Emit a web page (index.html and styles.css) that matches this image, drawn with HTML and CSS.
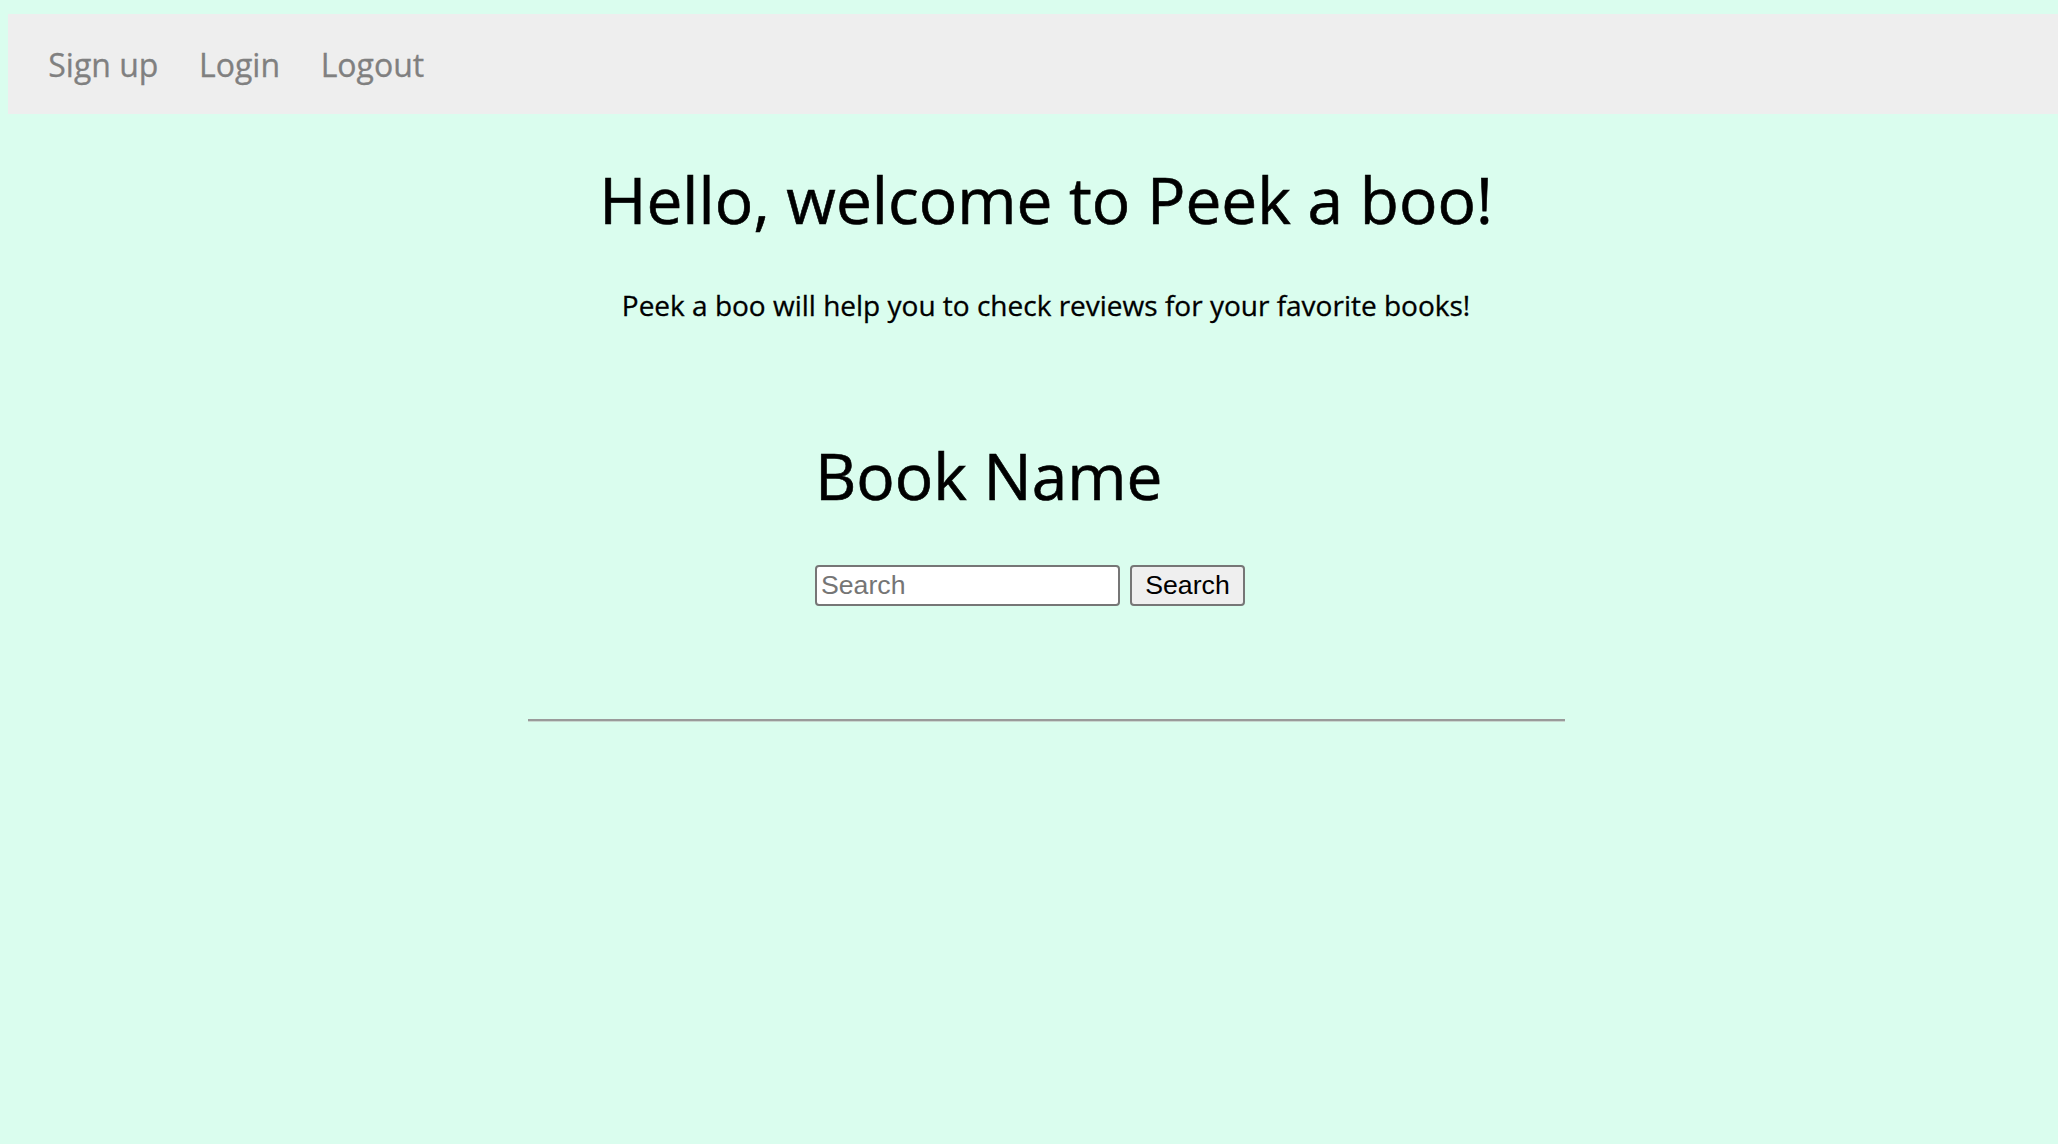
FILE: index.html
```html
<!DOCTYPE html>
<html lang="en">
<head>
<meta charset="utf-8">
<title>Peek a boo</title>
<link rel="stylesheet" href="styles.css">
</head>
<body>
<nav class="topnav">
  <a class="nav-link" href="#">Sign up</a>
  <a class="nav-link" href="#">Login</a>
  <a class="nav-link" href="#">Logout</a>
</nav>
<section class="intro">
  <h1 class="title">Hello, welcome to Peek a boo!</h1>
  <p class="lead">Peek a boo will help you to check reviews for your favorite books!</p>
</section>
<section class="search">
  <h1 class="search-title">Book Name</h1>
  <form class="search-form">
    <input class="search-input" type="text" placeholder="Search">
    <button class="search-button" type="button">Search</button>
  </form>
</section>
<div class="divider-wrap"><hr class="divider"></div>
</body>
</html>
```

FILE: styles.css
```css
html, body {
  margin: 0;
  padding: 0;
}
body {
  background: #dafdee;
  font-family: "Open Sans", "Noto Sans", sans-serif;
  color: #000;
  min-height: 1144px;
}
.topnav {
  margin: 14px 0 0 8px;
  height: 100px;
  box-sizing: border-box;
  background: #eeeeee;
  display: flex;
  align-items: center;
  padding: 0 0 0 20px;
}
.nav-link {
  font-size: 32px;
  color: #808080;
  text-decoration: none;
  padding: 0 20.3px;
  line-height: normal;
  -webkit-text-stroke: 0.3px #808080;
}
.intro {
  padding-left: 34px;
  text-align: center;
}
.title {
  font-size: 64px;
  font-weight: normal;
  margin: 42px 0 43px;
  line-height: normal;
  -webkit-text-stroke: 0.6px #000;
}
.lead {
  font-size: 28px;
  margin: 0;
  line-height: normal;
  -webkit-text-stroke: 0.3px #000;
}
.search {
  width: 432px;
  margin: 0 auto;
  padding-left: 4px;
}
.search-title {
  font-size: 64px;
  font-weight: normal;
  margin: 108px 0 0;
  line-height: normal;
  -webkit-text-stroke: 0.6px #000;
}
.search-form {
  display: flex;
  gap: 10px;
  margin: 46px 0 0;
}
.search-input {
  box-sizing: border-box;
  width: 305px;
  height: 41px;
  border: 2px solid #767676;
  border-radius: 4px;
  padding: 2px 4px;
  background: #fff;
  font-family: "Liberation Sans", Arial, sans-serif;
  font-size: 26.67px;
  color: #000;
  outline: none;
}
.search-input::placeholder {
  color: #757575;
}
.search-button {
  box-sizing: border-box;
  width: 115px;
  height: 41px;
  border: 2px solid #767676;
  border-radius: 4px;
  background: #efefef;
  font-family: "Liberation Sans", Arial, sans-serif;
  font-size: 26.67px;
  color: #000;
  padding: 0 10px;
}
.divider-wrap {
  padding-left: 34px;
}
.divider {
  width: 1037px;
  margin: 113px auto 0;
  border: 0;
  border-top: 2px solid #9a9a9a;
  border-bottom: 1px solid #c8d8d0;
  height: 0;
}
```
